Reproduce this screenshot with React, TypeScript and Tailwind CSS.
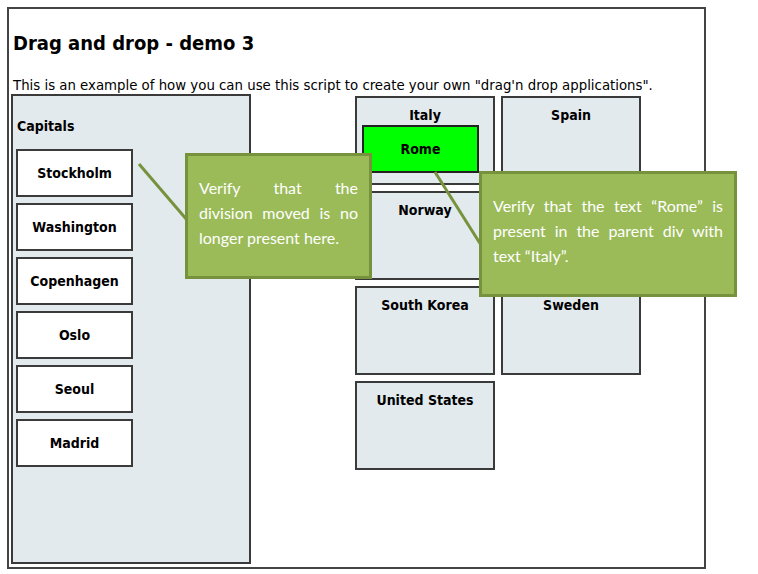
import React from "react";

const capitals = ["Stockholm", "Washington", "Copenhagen", "Oslo", "Seoul", "Madrid"];

const CountryBox: React.FC<{ name: string; children?: React.ReactNode }> = ({ name, children }) => (
    <div className="w-[140px] h-[89px] bg-[#e2eaed] border-2 border-[#3a3a3a] pt-[9px]">
        <div className="text-center text-[14px] leading-[17px] font-bold text-black">{name}</div>
        {children}
    </div>
);

export default function App() {
    return (
        <div className="relative w-[758px] h-[574px] bg-white overflow-hidden font-['DejaVu_Sans_Condensed','DejaVu_Sans',sans-serif] text-black">
            <div className="ml-[7px] mt-[7px] w-[699px] h-[562px] border-2 border-[#444] pl-[2px]">
                {/* Title */}
                <h1 className="pt-[21px] pl-[2px] text-[20px] leading-[26px] font-bold">Drag and drop - demo 3</h1>
                <p className="mt-[20px] pl-[2px] text-[14.8px] leading-[18px] whitespace-nowrap">
                    This is an example of how you can use this script to create your own "drag'n drop applications".
                </p>

                <div className="flex items-start">
                    {/* Capitals panel */}
                    <div className="w-[240px] h-[470px] bg-[#e2eaed] border-2 border-[#3a3a3a] pl-[3px] pt-[22px]">
                        <div className="text-[14px] leading-[17px] font-bold pl-[1px]">Capitals</div>
                        <div className="mt-[14px] flex flex-col gap-[6px]">
                            {capitals.map((c) => (
                                <div
                                    key={c}
                                    className="w-[117px] h-[48px] bg-white border-2 border-[#3a3a3a] flex items-center justify-center text-[14px] font-bold"
                                >
                                    {c}
                                </div>
                            ))}
                        </div>
                    </div>

                    {/* Countries */}
                    <div className="ml-[104px] mt-[2px] grid grid-cols-[140px_140px] gap-[6px]">
                        <CountryBox name="Italy">
                            <div className="ml-[5px] mt-[1px] w-[117px] h-[48px] bg-[#00ff00] border-2 border-[#222] flex items-center justify-center text-[14px] font-bold">
                                Rome
                            </div>
                        </CountryBox>
                        <CountryBox name="Spain" />
                        <CountryBox name="Norway" />
                        <CountryBox name="" />
                        <CountryBox name="South Korea" />
                        <CountryBox name="Sweden" />
                        <CountryBox name="United States" />
                    </div>
                </div>
            </div>

            {/* connector lines */}
            <svg className="absolute left-0 top-0" width="758" height="574">
                <line x1="139" y1="164" x2="187" y2="220" stroke="#76923c" strokeWidth="3" />
                <line x1="435" y1="172" x2="481" y2="245" stroke="#76923c" strokeWidth="3" />
            </svg>

            {/* callouts */}
            <div className="absolute left-[185px] top-[153px] w-[187px] h-[126px] bg-[#9bbb59] border-[3px] border-[#76923c] pl-[11px] pr-[11px] pt-[19px] text-white text-[16px] leading-[25px] font-['Lato','Open_Sans',sans-serif]">
                <div className="text-justify [text-align-last:justify]">Verify that the</div>
                <div className="text-justify [text-align-last:justify]">division moved is no</div>
                <div>longer present here.</div>
            </div>
            <div className="absolute left-[479px] top-[171px] w-[258px] h-[126px] bg-[#9bbb59] border-[3px] border-[#76923c] pl-[11px] pr-[11px] pt-[19px] text-white text-[16px] leading-[25px] text-justify font-['Lato','Open_Sans',sans-serif]">
                Verify that the text “Rome” is present in the parent div with text “Italy”.
            </div>
        </div>
    );
}
